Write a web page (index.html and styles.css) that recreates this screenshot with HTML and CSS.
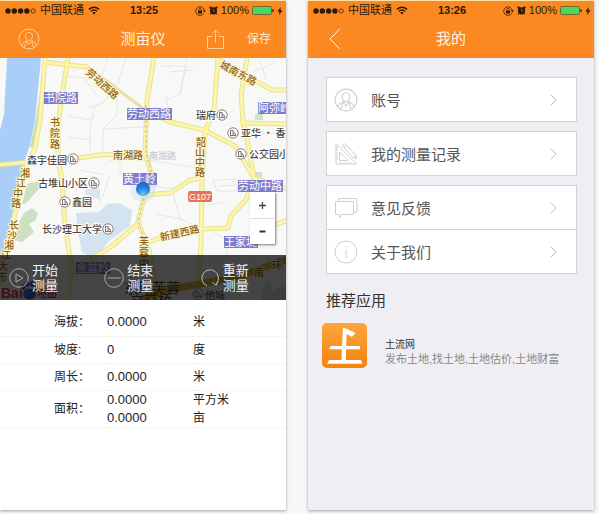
FILE: index.html
```
<!DOCTYPE html>
<html lang="zh-CN">
<head>
  <meta charset="utf-8">
  <meta name="viewport" content="width=device-width">
  <title>测亩仪</title>
  <link rel="stylesheet" href="styles.css">
</head>
<body>
  <!-- shared icons -->
  <svg class="defs" width="0" height="0" aria-hidden="true">
    <symbol id="dots" viewBox="0 0 31 6">
      <circle cx="3" cy="3" r="2.7"/><circle cx="9.3" cy="3" r="2.7"/><circle cx="15.6" cy="3" r="2.7"/><circle cx="21.9" cy="3" r="2.7"/>
      <circle cx="28.2" cy="3" r="2.1" fill="none" stroke="currentColor" stroke-width=".7"/>
    </symbol>
    <symbol id="wifi" viewBox="0 0 12 9">
      <path d="M1 3.4Q6-1 11 3.4M2.9 5.3Q6 2.6 9.1 5.3" fill="none" stroke="currentColor" stroke-width="1.4"/>
      <path d="M6 8.6L4.2 6.8Q6 5.4 7.8 6.8z"/>
    </symbol>
    <symbol id="lock" viewBox="0 0 11 10">
      <path d="M8.8 7.2A4.3 4.3 0 1 1 9.3 4.6" fill="none" stroke="currentColor" stroke-width=".8"/>
      <path d="M7.8 4.4h3L9.3 6.4zM3 4.6h4v2.9H3z"/>
      <path d="M3.8 4.8V3.6a1.2 1.2 0 0 1 2.4 0v1.2" fill="none" stroke="currentColor" stroke-width=".7"/>
    </symbol>
    <symbol id="alarm" viewBox="0 0 9 9">
      <circle cx="4.5" cy="4.8" r="3.6"/><circle cx="1.6" cy="1.6" r="1.2"/><circle cx="7.4" cy="1.6" r="1.2"/>
      <path d="M2 7l-1 1.6M7 7l1 1.6" stroke="currentColor"/>
      <path d="M4.500 3v2h1.500" fill="none" stroke="#fb8820" stroke-width=".6"/>
    </symbol>
    <symbol id="battery" viewBox="0 0 22 9">
      <rect x=".5" y=".5" width="19" height="8" rx="1" fill="#4bd763" stroke="#5a4a20" stroke-width=".7"/>
      <path d="M20.4 3a1.5 1.5 0 0 1 0 3z"/>
    </symbol>
    <symbol id="bolt" viewBox="0 0 6 8"><path d="M3.8 0L.4 4.6h2L2 8l3.6-4.7H3.4z"/></symbol>
    <symbol id="user" viewBox="0 0 22 22">
      <g fill="none" stroke="currentColor">
        <circle cx="11" cy="11" r="10"/>
        <path d="M11 4.400c-2.600 0-3.700 1.900-3.500 4 .2 2 1.500 4.200 3.500 4.200s3.300-2.200 3.500-4.200c.2-2.100-.9-4-3.500-4z"/>
        <path d="M3.800 17.500c.3-2 1.200-3.700 4.600-4.700L11 16.500l2.600-3.700c3.400 1 4.300 2.700 4.600 4.700M8.400 12.800L6.500 19.500M13.600 12.800l1.900 6.700"/>
      </g>
    </symbol>
    <symbol id="chevron" viewBox="0 0 7 12"><path d="M.7.7L6.200 6 .7 11.300" fill="none" stroke="currentColor"/></symbol>
    <symbol id="poi" viewBox="0 0 12 12">
      <circle cx="6" cy="6" r="5.200" fill="#fff" stroke="#8d8080"/>
      <path d="M3.500 8.500v-5h2.600v5M6.100 5.400l2.200 1v2.100M3 8.600h6.300" fill="none" stroke="#776c6c"/>
    </symbol>
  </svg>

  <section class="phone">
    <header class="top">
      <div class="status">
        <div class="status-left">
          <svg width="31" height="6"><use href="#dots"/></svg>
          <span class="carrier">中国联通</span>
          <svg width="12" height="9"><use href="#wifi"/></svg>
        </div>
        <time class="clock">13:25</time>
        <div class="status-right">
          <svg width="11" height="10"><use href="#lock"/></svg>
          <svg width="9" height="9"><use href="#alarm"/></svg>
          <span class="percent">100%</span>
          <svg width="22" height="9"><use href="#battery"/></svg>
          <svg width="6" height="8"><use href="#bolt"/></svg>
        </div>
      </div>
      <div class="nav">
        <button class="icon-btn" aria-label="我的"><svg width="22" height="22"><use href="#user"/></svg></button>
        <h1>测亩仪</h1>
        <div class="nav-right">
          <button class="icon-btn" aria-label="分享">
            <svg width="17" height="20" viewBox="0 0 17 20" fill="none" stroke="currentColor"><path d="M5.500 7.500h-5v12h16v-12h-5M8.500 14V1M5 4.500L8.500 1 12 4.500"/></svg>
          </button>
          <button class="save">保存</button>
        </div>
      </div>
    </header>

    <div class="map">
      <svg class="map-pic" viewBox="0 58 286 242" preserveAspectRatio="xMidYMid slice">
        <rect y="58" width="286" height="242" fill="#f8f8f7"/>
        <!-- water and parks -->
        <path d="M7 58H41L35 120 30 145 23 165 14 205 5 250 0 265V130L4 115z" fill="#a9cef8"/>
        <path d="M76 213l23-1 8-8 12-1 13 7-2 16-20 14-16 20-12-8-4-20z" fill="#d3e3f0"/>
        <path d="M85 189l15-1v12l-14-5z" fill="#d9e6f0"/>
        <path d="M40 92l2 8-5 44-7 4 6-30z" fill="#c5ddb8"/>
        <path d="M27 184l12-3 2 6-15 16-4 2zM24 213l8-5 6 5-2 7-7 4 5 8-12 10-8-2 5-18z" fill="#cfe0c2"/>
        <path d="M254 172h8v6h-8zM255 114h8v6h-8zM262 288l8-6 2 10 14-7v15h-24z" fill="#cfe4ca"/>
        <!-- minor streets -->
        <g fill="none" stroke="#e6e6e6">
          <path d="M62 76l22 2 12 16M74 58v14M108 58l-10 30M126 58l-8 25-15 20-16 5M95 106l-5 20v26M67 116l24 4M68 137l22 3M117 90v25l-14 14v22M103 129l39-2M160 66h26l-6 28-14 6M187 58l-7 36M170 72l24-2M108 160l12 1v13h14M147 185l25 4 8 30 18 7M148 160l50 8M156 214l24 5M80 170l25 5M213 180l24-1v12h-20zM220 186l30-2M208 205l18-3M208 260l30-5 22 6M214 232l13 8v20M253 72l22-10M260 60l6 20M247 135l38-2M166 95l3 20M100 204l10-28"/>
        </g>
        <!-- main roads -->
        <g fill="none" stroke-linejoin="round">
          <g stroke="#e8e09c" stroke-width="5">
            <path d="M45 58L40 120 35 148 25 170 16 210 6 250-2 278"/>
            <path d="M68 58L62 95 58 125 58 160 62 180 65 225 69 252 72 268 68 300"/>
            <path d="M-2 165L30 162 70 159 100 155 145 153"/>
            <path d="M44 62L68 65 88 67"/>
            <path d="M145 110L170 122 204 130 235 146 254 178"/>
            <path d="M154 58L147 100 145 153 152 175 142 205 138 222 149 250 158 300"/>
            <path d="M218 58L214 110 205 132 202 180 201 245 197 300"/>
            <path d="M247 58L241 95 243 120 249 150 254 178 246 200 231 216 228 228 201 229"/>
            <path d="M216 58L243 74 272 90 288 90M240 123L288 124M142 195L170 193 190 180 202 178"/>
            <path d="M201 229L165 236 146 243 148 252M90 260L112 246 140 222M254 178L288 189M272 226L288 220"/>
          </g>
          <g stroke="#fdf6a6" stroke-width="3">
            <path d="M45 58L40 120 35 148 25 170 16 210 6 250-2 278"/>
            <path d="M68 58L62 95 58 125 58 160 62 180 65 225 69 252 72 268 68 300"/>
            <path d="M-2 165L30 162 70 159 100 155 145 153"/>
            <path d="M44 62L68 65 88 67"/>
            <path d="M88 67L145 110" stroke="#e8e09c"/>
            <path d="M145 110L170 122 204 130 235 146 254 178"/>
            <path d="M154 58L147 100 145 153 152 175 142 205 138 222 149 250 158 300"/>
            <path d="M218 58L214 110 205 132 202 180 201 245 197 300"/>
            <path d="M247 58L241 95 243 120 249 150 254 178 246 200 231 216 228 228 201 229"/>
            <path d="M216 58L243 74 272 90 288 90M240 123L288 124M142 195L170 193 190 180 202 178"/>
            <path d="M201 229L165 236 146 243 148 252M90 260L112 246 140 222M254 178L288 189M272 226L288 220"/>
          </g>
          <path d="M140 300L165 290 200 284 240 276 262 268 288 259" stroke="#d9b32c" stroke-width="7"/>
          <path d="M146 105V153L152 175 142 205 138 222 149 250" stroke="#bdb68c" stroke-dasharray="3 2"/>
        </g>
        <!-- road names -->
        <g class="road">
          <text transform="translate(85 73) rotate(42)">劳动西路</text>
          <text transform="translate(219 67) rotate(28)">城南东路</text>
          <text x="113" y="159">南湖路</text>
          <text transform="translate(161 241) rotate(-13)">新建西路</text>
          <text x="50 50 50" y="126 137 148">书院路</text>
          <text x="20 16 13 11" y="177 187 197 207">湘江中路</text>
          <text x="9 7 4 1 -2 -3" y="229 239 249 259 270 281">长沙湘江大市</text>
          <text x="196 195 195 195" y="146 156 166 176">韶山中路</text>
          <text x="139 139 139" y="245 256 267">芙蓉中</text>
          <text x="254 272" y="276 269">南环</text>
        </g>
        <text class="faint" x="149" y="159">南湖路</text>
        <!-- district tags -->
        <g fill="#7f7ccd">
          <rect x="44" y="92" width="34" height="12"/><rect x="127" y="108" width="45" height="12"/>
          <rect x="258" y="102" width="34" height="12"/><rect x="123" y="173" width="34" height="12"/>
          <rect x="238" y="180" width="45" height="12"/><rect x="224" y="236" width="34" height="12"/>
          <rect x="76" y="262" width="34" height="12"/>
        </g>
        <g class="tag">
          <text x="44" y="102">书院路</text><text x="127" y="118">劳动西路</text><text x="258" y="112">阿弥岭</text>
          <text x="123" y="183">黄土岭</text><text x="238" y="190">劳动中路</text><text x="224" y="246">王家垅</text><text x="76" y="272">金盆岭</text>
        </g>
        <rect x="188" y="191" width="24" height="11" rx="2" fill="#e5735c"/>
        <text class="highway" x="200" y="200">G107</text>
        <!-- places -->
        <g class="place">
          <text x="27" y="164">森宇佳园</text><text x="38" y="187">古堆山小区</text><text x="72" y="206">鑫园</text>
          <text x="42" y="233">长沙理工大学</text><text x="196" y="119">瑞府</text><text x="241" y="137">亚华 · 香舍</text>
          <text x="249" y="158">公交园小区</text><text x="205" y="299">他城</text>
        </g>
        <use href="#poi" x="67" y="153" width="12" height="12"/><use href="#poi" x="88" y="177" width="12" height="12"/>
        <use href="#poi" x="59" y="196" width="12" height="12"/><use href="#poi" x="102" y="223" width="12" height="12"/>
        <use href="#poi" x="216" y="109" width="12" height="12"/><use href="#poi" x="227" y="127" width="12" height="12"/>
        <use href="#poi" x="235" y="148" width="12" height="12"/><use href="#poi" x="192" y="288" width="12" height="12"/>
        <g class="junction"><text x="124" y="293">东环芙蓉</text><text x="130" y="305">立交桥</text></g>
        <!-- map vendor mark -->
        <g class="vendor"><text x="1" y="298">Bai</text><text class="vendor-cn" x="37" y="297">地图</text></g>
        <g fill="#3a4fd0"><ellipse cx="29.500" cy="294" rx="6.500" ry="5.500"/><ellipse cx="23.500" cy="287" rx="2" ry="3"/><ellipse cx="27.500" cy="284" rx="2" ry="3"/><ellipse cx="32" cy="284" rx="2" ry="3"/><ellipse cx="36" cy="288" rx="2" ry="3"/></g>
        <!-- current position -->
        <circle cx="143" cy="189" r="13" fill="#8fc4f5" opacity=".18"/>
        <circle cx="143" cy="189" r="7" fill="url(#dot)"/>
        <defs><radialGradient id="dot" cx=".5" cy=".85" r=".8"><stop offset="0" stop-color="#6cc4ff"/><stop offset=".5" stop-color="#2b8be8"/><stop offset="1" stop-color="#1d62bd"/></radialGradient></defs>
      </svg>
      <div class="zoom">
        <button aria-label="放大"><svg width="9" height="9" viewBox="0 0 9 9"><path d="M1 4.500h7M4.500 1v7" stroke="#444" stroke-width="1.300"/></svg></button>
        <button aria-label="缩小"><svg width="9" height="9" viewBox="0 0 9 9"><path d="M1.500 4.500h6" stroke="#333" stroke-width="2"/></svg></button>
      </div>
      <div class="tools">
        <button>
          <svg width="20" height="20" viewBox="0 0 20 20" fill="none" stroke="#aaa"><circle cx="10" cy="10" r="9.300"/><path d="M7 6v8l7-4z"/></svg>
          <span>开始<br>测量</span>
        </button>
        <button>
          <svg width="20" height="20" viewBox="0 0 20 20" fill="none" stroke="#aaa"><circle cx="10" cy="10" r="9.300"/><path d="M3.500 10h13"/></svg>
          <span>结束<br>测量</span>
        </button>
        <button>
          <svg width="20" height="20" viewBox="0 0 20 20" fill="none" stroke="#bbb"><path d="M7 17.800A8.300 8.300 0 1 1 16.500 15.500M12.500 14.500l3.700 2.700 1.800-4.200"/></svg>
          <span>重新<br>测量</span>
        </button>
      </div>
    </div>

    <table class="result">
      <tr><th scope="row">海拔：</th><td class="num">0.0000</td><td>米</td></tr>
      <tr><th scope="row">坡度:</th><td class="num">0</td><td>度</td></tr>
      <tr><th scope="row">周长：</th><td class="num">0.0000</td><td>米</td></tr>
      <tr class="area"><th scope="row">面积：</th><td class="num">0.0000<br>0.0000</td><td>平方米<br>亩</td></tr>
    </table>
  </section>

  <section class="phone mine">
    <header class="top">
      <div class="status">
        <div class="status-left">
          <svg width="31" height="6"><use href="#dots"/></svg>
          <span class="carrier">中国联通</span>
          <svg width="12" height="9"><use href="#wifi"/></svg>
        </div>
        <time class="clock">13:26</time>
        <div class="status-right">
          <svg width="11" height="10"><use href="#lock"/></svg>
          <svg width="9" height="9"><use href="#alarm"/></svg>
          <span class="percent">100%</span>
          <svg width="22" height="9"><use href="#battery"/></svg>
          <svg width="6" height="8"><use href="#bolt"/></svg>
        </div>
      </div>
      <div class="nav">
        <button class="icon-btn back" aria-label="返回"><svg width="12" height="22" viewBox="0 0 12 22" fill="none" stroke="currentColor"><path d="M11 .7L1 11l10 10.300"/></svg></button>
        <h1>我的</h1>
      </div>
    </header>

    <nav class="menu">
      <div class="group">
        <a href="#"><svg class="ico" width="24" height="24" viewBox="0 0 22 22"><use href="#user" width="22" height="22"/></svg>账号<svg class="arrow" width="7" height="12"><use href="#chevron"/></svg></a>
      </div>
      <div class="group">
        <a href="#">
          <svg class="ico" width="24" height="24" viewBox="0 0 24 24" fill="none" stroke="currentColor"><path d="M2 1.500v20.500h20.500zM5.500 10v8.500H14zM2 5h2M2 8h2M2 11h2M2 14h2M2 17h2M7 22v-2M10 22v-2M13 22v-2M16 22v-2M8 3.500L10.500 1.500 22 13.500l.5 3-3-.5zM10 5.500l2.500-2M19.500 16l2.500-2.500"/></svg>我的测量记录<svg class="arrow" width="7" height="12"><use href="#chevron"/></svg>
        </a>
      </div>
      <div class="group">
        <a href="#">
          <svg class="ico" width="24" height="24" viewBox="0 0 24 24" fill="none" stroke="currentColor"><path d="M1.500 5.500h18v13h-11l-3 3v-3h-4zM4.500 5.500v-3h18.500v13.500h-3.500"/></svg>意见反馈<svg class="arrow" width="7" height="12"><use href="#chevron"/></svg>
        </a>
        <a href="#">
          <svg class="ico" width="24" height="24" viewBox="0 0 24 24" fill="none" stroke="currentColor"><circle cx="12" cy="12" r="11"/><path d="M12 9.500V18M12 6v1.500"/></svg>关于我们<svg class="arrow" width="7" height="12"><use href="#chevron"/></svg>
        </a>
      </div>
    </nav>

    <h2>推荐应用</h2>
    <a class="app" href="#">
      <svg width="45" height="45" viewBox="0 0 45 45">
        <defs><linearGradient id="og" x2="0" y2="1"><stop offset="0" stop-color="#fba63e"/><stop offset="1" stop-color="#f5820f"/></linearGradient></defs>
        <rect width="45" height="45" rx="5" fill="url(#og)"/>
        <path d="M21 4.500l4 1.500 8.500 4-3.500 4-5.500-3-.3 12H38v3.300H24L24 37h15l1.500 3.700H5L7 37h12.500l.3-10.700H7L9 23h11z" fill="#fff"/>
      </svg>
      <div class="app-txt">
        <strong>土流网</strong>
        <p>发布土地,找土地,土地估价,土地财富</p>
      </div>
    </a>
  </section>
</body>
</html>
```
FILE: styles.css
```
* {box-sizing:border-box;}
body {
	display:grid;
	grid-template-columns:1fr 1fr;
	gap:22px;
	min-height:100vh;
	margin:0;
	padding:0 5px 4px 0;
	background:#f7f7f7;
	font-family:"Liberation Sans", "Noto Sans CJK SC", sans-serif;
}
.defs {position:absolute;}
button {
	margin:0; padding:0;
	border:0;
	background:none;
	color:inherit;
	font-family:inherit;
}
a {color:inherit; text-decoration:none;}
svg {display:block; flex:none; fill:currentColor;}
svg[fill="none"] {fill:none;}

.phone {
	min-width:0;
	background:#fff;
	box-shadow:0 1px 3px rgba(0,0,0,.35);
}
.mine {background:#efeef3;}

/* header */
.top {
	border-top:1px solid #ffe3a6;
	background:#fb8820;
}
.status {
	display:grid;
	grid-template-columns:1fr auto 1fr;
	align-items:center;
	height:19px;
	padding:0 3px 0 5px;
	color:#2b1a08;
	font-size:11px;
	line-height:19px;
}
.status-left, .status-right {display:flex; align-items:center; gap:4px;}
.status-right {justify-content:flex-end; gap:3px;}
.clock {font-size:11px; font-weight:bold;}

.nav {
	display:grid;
	grid-template-columns:1fr auto 1fr;
	align-items:center;
	height:38px;
	padding:0 15px;
	color:#ffe6cc;
}
.nav h1 {margin:0; font-size:15px; font-weight:normal; line-height:20px; color:#fff3e4;}
.icon-btn {justify-self:start; padding-left:3px; color:#ffcf9c;}
.back {padding-left:6px; color:#fff;}
.nav-right {display:flex; align-items:center; justify-content:flex-end; gap:23px;}
.save {font-size:12px; line-height:20px;}

/* map */
.map {position:relative; height:242px; overflow:hidden;}
.map-pic {width:100%; height:100%;}
.map-pic text {font-family:"Noto Sans CJK SC", sans-serif; font-size:10px;}
.map-pic .road {fill:#8f6510; stroke:#fff8d8; stroke-width:2px; paint-order:stroke; font-weight:500;}
.map-pic .faint {fill:#c4c4c8; font-size:9px;}
.map-pic .tag text {fill:#fff; font-size:11px;}
.map-pic .place {fill:#4c4646; stroke:#fff; stroke-width:2px; paint-order:stroke; font-weight:500;}
.map-pic .highway {fill:#fff; font-family:"Liberation Sans", sans-serif; font-size:9px; text-anchor:middle;}
.map-pic .junction text {fill:#3c2c20; font-size:14px;}
.map-pic .vendor {fill:#e02a2e;}
.map-pic .vendor text {font-family:"Liberation Sans", "Noto Sans CJK SC", sans-serif; font-size:14px; font-weight:bold;}
.map-pic .vendor .vendor-cn {font-size:10px;}

.zoom {
	position:absolute; right:11px; bottom:56px;
	width:25px;
	background:#fff;
	box-shadow:1px 1px 2px rgba(0,0,0,.5);
}
.zoom button {display:flex; align-items:center; justify-content:center; width:100%; height:26px;}
.zoom button + button {border-top:1px solid #ddd;}

.tools {
	position:absolute; left:0; bottom:0;
	display:grid;
	grid-template-columns:repeat(3,1fr);
	width:100%; height:45px;
	background:rgba(8,8,8,.75);
}
.tools button {
	display:flex;
	align-items:center;
	gap:3px;
	padding-left:9px;
	color:#f2f2f2;
	font-size:13px;
	line-height:15px;
}

/* measured values */
.result {
	width:100%;
	margin-top:9px;
	border-collapse:collapse;
	table-layout:fixed;
	color:#222;
	font-size:12px;
	line-height:18px;
	text-align:left;
}
.result tr {height:27px; border-bottom:1px dotted #ececec;}
.result .area {height:36px;}
.result th {width:107px; padding:0 0 0 54px; font-weight:normal; white-space:nowrap;}
.result td {padding:0;}
.result .num {width:86px; font-size:13px;}

/* my page */
.menu {display:grid; gap:9px; padding:19px 17px 0 18px;}
.group {border:1px solid #d2d2d4; background:#fff;}
.group a {
	display:flex;
	align-items:center;
	height:43px;
	padding:0 19px 0 7px;
	color:#555;
	font-size:15px;
}
.group a + a {height:44px; border-top:1px solid #d2d2d4;}
.ico {margin-right:13px; color:#cfcfcf;}
.arrow {margin-left:auto; color:#bbb;}
.mine h2 {margin:17px 18px 0; color:#333; font-size:15px; font-weight:normal; line-height:20px;}
.app {display:flex; gap:18px; margin:12px 14px 0;}
.app-txt {padding-top:15px; line-height:14px;}
.app strong {display:block; color:#333; font-size:10px; font-weight:normal;}
.app p {margin:0; color:#888; font-size:11px; white-space:nowrap;}
```
